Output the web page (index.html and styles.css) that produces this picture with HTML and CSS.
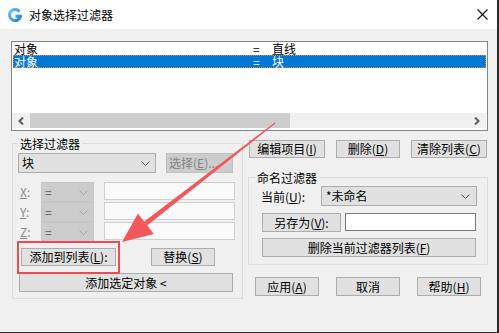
FILE: index.html
```html
<!DOCTYPE html>
<html lang="zh-CN">
<head>
<meta charset="utf-8">
<title>对象选择过滤器</title>
<link rel="stylesheet" href="styles.css">
</head>
<body>
<div class="window">
  <div class="titlebar">
    <svg class="app-icon" width="14" height="14" viewBox="0 0 14 14">
      <defs>
        <linearGradient id="g" x1="0" y1="0" x2="1" y2="1">
          <stop offset="0" stop-color="#6cc3f7"/>
          <stop offset="1" stop-color="#1f7fe0"/>
        </linearGradient>
      </defs>
      <path d="M11.6 3.6 A5.6 5.6 0 1 0 12.6 8.2 L7.4 8.2" fill="none" stroke="url(#g)" stroke-width="3" stroke-linejoin="round"/>
    </svg>
    <span class="title">对象选择过滤器</span>
    <svg class="close" width="11" height="11" viewBox="0 0 11 11">
      <path d="M0.5 0.5 L10.5 10.5 M10.5 0.5 L0.5 10.5" stroke="#111" stroke-width="1.1"/>
    </svg>
  </div>

  <div class="listbox">
    <div class="rows">
      <div class="row"><span class="c1">对象</span><span class="c2">=</span><span class="c3">直线</span></div>
      <div class="row sel"><span class="c1">对象</span><span class="c2">=</span><span class="c3">块</span></div>
    </div>
    <div class="hscroll">
      <span class="sb-btn"><svg width="6" height="8" viewBox="0 0 6 8"><path d="M5 0.5 L1.5 4 L5 7.5" fill="none" stroke="#606060" stroke-width="2"/></svg></span>
      <span class="thumb"></span>
      <span class="track"></span>
      <span class="sb-btn"><svg width="6" height="8" viewBox="0 0 6 8"><path d="M1 0.5 L4.5 4 L1 7.5" fill="none" stroke="#606060" stroke-width="2"/></svg></span>
    </div>
  </div>

  <div class="lower">
    <div class="group left-group">
      <div class="gtitle">选择过滤器</div>
      <div class="sel-row">
        <div class="combo combo-block"><span class="combo-text">块</span><svg class="chev" width="9" height="5" viewBox="0 0 9 5"><path d="M0.5 0.5 L4.5 4.5 L8.5 0.5" fill="none" stroke="#555" stroke-width="1"/></svg></div>
        <div class="btn btn-disabled btn-select">选择(<u>E</u>)...</div>
      </div>
      <div class="xyz">
        <div class="xyz-row">
          <span class="axis"><u>X</u>:</span>
          <div class="combo combo-dis"><span class="combo-text">=</span><svg class="chev" width="9" height="5" viewBox="0 0 9 5"><path d="M0.5 0.5 L4.5 4.5 L8.5 0.5" fill="none" stroke="#a5a5a5" stroke-width="1"/></svg></div>
          <div class="field field-dis"></div>
        </div>
        <div class="xyz-row">
          <span class="axis"><u>Y</u>:</span>
          <div class="combo combo-dis"><span class="combo-text">=</span><svg class="chev" width="9" height="5" viewBox="0 0 9 5"><path d="M0.5 0.5 L4.5 4.5 L8.5 0.5" fill="none" stroke="#a5a5a5" stroke-width="1"/></svg></div>
          <div class="field field-dis"></div>
        </div>
        <div class="xyz-row">
          <span class="axis"><u>Z</u>:</span>
          <div class="combo combo-dis"><span class="combo-text">=</span><svg class="chev" width="9" height="5" viewBox="0 0 9 5"><path d="M0.5 0.5 L4.5 4.5 L8.5 0.5" fill="none" stroke="#a5a5a5" stroke-width="1"/></svg></div>
          <div class="field field-dis"></div>
        </div>
      </div>
      <div class="add-row">
        <div class="btn btn-add">添加到列表(<u>L</u>):</div>
        <div class="btn btn-replace">替换(<u>S</u>)</div>
      </div>
      <div class="btn btn-addsel">添加选定对象 &lt;</div>
    </div>

    <div class="right">
      <div class="btn-row">
        <div class="btn btn-edit">编辑项目(<u>I</u>)</div>
        <div class="btn btn-del">删除(<u>D</u>)</div>
        <div class="btn btn-clear">清除列表(<u>C</u>)</div>
      </div>
      <div class="group named-group">
        <div class="gtitle">命名过滤器</div>
        <div class="cur-row">
          <span class="cur-label">当前(<u>U</u>):</span>
          <div class="combo combo-cur"><span class="combo-text">*未命名</span><svg class="chev" width="9" height="5" viewBox="0 0 9 5"><path d="M0.5 0.5 L4.5 4.5 L8.5 0.5" fill="none" stroke="#555" stroke-width="1"/></svg></div>
        </div>
        <div class="save-row">
          <div class="btn btn-save">另存为(<u>V</u>):</div>
          <div class="field field-save"></div>
        </div>
        <div class="del-row">
          <div class="btn btn-delcur">删除当前过滤器列表(<u>F</u>)</div>
        </div>
      </div>
      <div class="bottom-row">
        <div class="btn btn-bottom">应用(<u>A</u>)</div>
        <div class="btn btn-bottom">取消</div>
        <div class="btn btn-bottom">帮助(<u>H</u>)</div>
      </div>
    </div>
  </div>

  <div class="highlight"></div>
  <svg class="arrow" width="499" height="333" viewBox="0 0 499 333">
    <polygon points="275.3,123.4 274.7,122.6 144.2,221.6 147.2,225.6" fill="#f2575b"/>
    <polygon points="122,242 137.9,213.6 153.8,234.1" fill="#f2575b"/>
  </svg>
</div>
</body>
</html>
```

FILE: styles.css
```css
body {
  margin: 0;
  font-family: "Noto Sans CJK SC", "Noto Sans", sans-serif;
  font-size: 12px;
  color: #000;
}

.window {
  position: relative;
  width: 499px;
  height: 333px;
  box-sizing: border-box;
  background: #f0f0f0;
  border-right: 2px solid #2b2b2b;
  border-bottom: 1px solid #2b2b2b;
  overflow: hidden;
}

/* title bar */
.titlebar {
  height: 29px;
  background: #fff;
  display: flex;
  align-items: center;
  padding: 0 9px 0 8px;
}
.app-icon { flex: none; }
.title {
  flex: 1;
  margin-left: 7px;
  font-size: 12px;
  line-height: 14px;
}
.close { flex: none; }

/* list box */
.listbox {
  margin: 12px 0 0 11px;
  width: 477px;
  height: 90px;
  box-sizing: border-box;
  border: 1px solid #858585;
  background: #fff;
  display: flex;
  flex-direction: column;
}
.rows {
  flex: 1;
  padding: 0 1px;
}
.row {
  display: flex;
  height: 13px;
  line-height: 13px;
  font-size: 12px;
  white-space: nowrap;
}
.c1 { width: 239px; padding-left: 1px; }
.c2 { width: 19px; }
.row.sel {
  background: #0078d7;
  color: #fff;
  outline: 1px dotted #e58a2c;
  outline-offset: -1px;
}
.hscroll {
  height: 15px;
  margin: 0 1px 2px 0;
  display: flex;
  background: #f0f0f0;
}
.sb-btn {
  width: 18px;
  display: flex;
  align-items: center;
  justify-content: center;
}
.thumb {
  width: 260px;
  background: #cdcdcd;
}
.track { flex: 1; }

/* lower area */
.lower {
  display: flex;
  padding-left: 12px;
  gap: 5px;
}

.group {
  border: 1px solid #dcdcdc;
  box-sizing: border-box;
}
.gtitle {
  width: fit-content;
  margin: -7px 0 0 5px;
  padding: 0 2px;
  background: #f0f0f0;
  line-height: 14px;
  font-size: 12px;
}

.left-group {
  width: 231px;
  margin-top: 12px;
  padding-bottom: 6px;
}

.btn {
  box-sizing: border-box;
  background: #e1e1e1;
  border: 1px solid #adadad;
  display: flex;
  align-items: center;
  justify-content: center;
  font-size: 12px;
  line-height: 1;
  white-space: nowrap;
}
.btn-disabled {
  background: #cccccc;
  border-color: #bfbfbf;
  color: #838383;
}

.combo {
  box-sizing: border-box;
  display: flex;
  align-items: center;
  background: #e1e1e1;
  border: 1px solid #adadad;
  line-height: 1;
}
.combo-text { flex: 1; padding-left: 3px; white-space: nowrap; }
.chev { flex: none; margin-right: 5px; }

.sel-row {
  display: flex;
  margin-top: 2px;
  padding-left: 5px;
}
.combo-block { width: 138px; height: 20px; }
.btn-select {
  width: 67px;
  height: 20px;
  margin-left: 10px;
  justify-content: flex-start;
  padding-left: 2px;
  overflow: hidden;
}

.xyz { margin-top: 9px; }
.xyz-row {
  display: flex;
  align-items: flex-start;
  height: 20px;
  padding-left: 7px;
}
.axis {
  width: 21px;
  color: #8a8a8a;
  line-height: 19px;
}
.combo-dis {
  width: 53px;
  height: 20px;
  background: #cccccc;
  border-color: #c6c6c6;
  color: #555;
}
.field {
  box-sizing: border-box;
  height: 18px;
}
.field-dis {
  width: 131px;
  margin-left: 10px;
  background: #fafafa;
  border: 1px solid #cfcfcf;
}

.add-row {
  display: flex;
  margin-top: 6px;
  padding-left: 8px;
}
.btn-add { width: 95px; height: 18px; }
.btn-replace { width: 64px; height: 18px; margin-left: 35px; }
.btn-addsel {
  width: 214px;
  height: 19px;
  margin: 7px 0 0 6px;
}

/* right column */
.right {
  width: 240px;
  display: flex;
  flex-direction: column;
}
.btn-row {
  display: flex;
  margin-top: 9px;
  padding-left: 1px;
  gap: 11px;
}
.btn-edit { width: 76px; height: 18px; }
.btn-del { width: 64px; height: 18px; }
.btn-clear { width: 76px; height: 18px; }

.named-group {
  width: 240px;
  margin-top: 19px;
  padding-bottom: 7px;
}
.named-group .gtitle { margin-left: 6px; }
.cur-row {
  display: flex;
  align-items: center;
  margin-top: 1px;
  padding-left: 12px;
}
.cur-label { width: 60px; }
.combo-cur { width: 156px; height: 20px; }
.combo-cur .combo-text { padding-left: 4px; }
.combo-cur .chev { margin-right: 6px; }

.save-row {
  display: flex;
  align-items: flex-start;
  margin-top: 7px;
  padding-left: 13px;
}
.btn-save { width: 79px; height: 19px; }
.field-save {
  width: 131px;
  height: 18px;
  margin-left: 4px;
  background: #fff;
  border: 1px solid #7a7a7a;
}
.del-row {
  display: flex;
  margin-top: 6px;
  padding-left: 13px;
}
.btn-delcur { width: 214px; height: 19px; }

.bottom-row {
  display: flex;
  margin-top: 12px;
  padding-left: 7px;
  gap: 17px;
}
.btn-bottom { width: 64px; height: 19px; }

/* annotation overlays */
.highlight {
  position: absolute;
  left: 17px;
  top: 241px;
  width: 103px;
  height: 33px;
  box-sizing: border-box;
  border: 2px solid #ef4a4f;
}
.arrow {
  position: absolute;
  left: 0;
  top: 0;
  pointer-events: none;
}
```
